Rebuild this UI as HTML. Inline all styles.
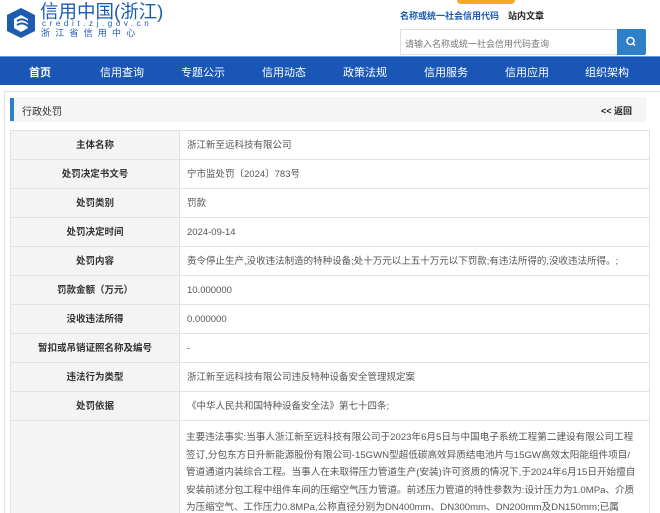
<!DOCTYPE html>
<html><head><meta charset="utf-8"><style>
*{margin:0;padding:0;box-sizing:border-box}
html,body{width:660px;height:513px;overflow:hidden}
body{background:#fff;font-family:"Liberation Sans","Noto Sans CJK SC",sans-serif}
#w{position:relative;width:660px;height:513px;overflow:hidden}
.abs{position:absolute}
.nav{left:0;top:56px;width:660px;height:29px;background:#1a56b6;border-top:1px solid #5aa0e0}
.nav span{position:absolute;top:7px;color:#fff;font-size:11px;transform:translateX(-50%)}
.frame{left:4px;top:91px;width:656px;height:422px;border:1px solid #dfe8d8;border-right:none;border-bottom:none}
.tbar{left:10px;top:97px;width:636px;height:25px;background:#f5f5f5}
.tw{position:absolute;left:10px;top:130px;width:641px;height:383px;overflow:hidden}
table{width:640px;border-collapse:collapse;table-layout:fixed;font-size:9.5px;color:#555}
td{border:1px solid #e2e2e2;height:29px;padding:1px 7px 0;white-space:nowrap;overflow:hidden;line-height:12px}
td.l{width:169px;background:#f4f4f4;text-align:center;color:#333;font-weight:bold}
</style></head><body><div id="w">
<svg class="abs" style="left:5px;top:7px" width="32" height="32" viewBox="0 0 32 32"><path d="M16 1 L30 8 L30 24 L16 31 L2 24 L2 8 Z" fill="#1c5bb0"/><path d="M9 12 L16 8 L23 12 L23 21 L16 25 L9 21 Z" fill="#fff"/><path d="M12 14 Q18 10 24 16 M12 18 Q18 14 24 20" stroke="#1c5bb0" stroke-width="2" fill="none"/></svg>
<div class="abs" style="left:40px;top:1px;font-size:18.5px;color:#1c5bb0;line-height:21px">信用中国(浙江)</div>
<div class="abs" style="left:42px;top:19px;font-size:8px;color:#1c5bb0;letter-spacing:3.6px;line-height:9px">credit.zj.gov.cn</div>
<div class="abs" style="left:41px;top:28px;font-size:9px;color:#1c5bb0;letter-spacing:5.2px;line-height:11px">浙江省信用中心</div>
<div class="abs" style="left:457px;top:0;width:58px;height:4px;background:#f5a623;border-radius:0 0 4px 4px"></div>
<div class="abs" style="left:400px;top:9px;font-size:9px;color:#1c5bb0;font-weight:bold">名称或统一社会信用代码</div>
<div class="abs" style="left:508px;top:9px;font-size:9px;color:#222;font-weight:bold">站内文章</div>
<div class="abs" style="left:400px;top:29px;width:218px;height:26px;border:1px solid #e0e0e0;font-size:9px;color:#777;padding:7px 4px">请输入名称或统一社会信用代码查询</div>
<div class="abs" style="left:617px;top:29px;width:29px;height:26px;background:#2f7fc8;border-radius:0 2px 2px 0"><svg width="29" height="26"><circle cx="13.5" cy="12" r="3.5" stroke="#fff" stroke-width="1.5" fill="none"/><path d="M16 14.5 L18 16.5" stroke="#fff" stroke-width="1.5"/></svg></div>
<div class="abs nav"><span style="left:40px;font-weight:bold">首页</span><span style="left:122px">信用查询</span><span style="left:203px">专题公示</span><span style="left:284px">信用动态</span><span style="left:365px">政策法规</span><span style="left:446px">信用服务</span><span style="left:527px">信用应用</span><span style="left:607px">组织架构</span></div>
<div class="abs frame"></div>
<div class="abs tbar"></div>
<div class="abs" style="left:10px;top:98px;width:4px;height:23px;background:#2f7fc8"></div>
<div class="abs" style="left:22px;top:103px;font-size:10px;color:#333">行政处罚</div>
<div class="abs" style="left:601px;top:104px;font-size:9px;color:#222;font-weight:bold">&lt;&lt; 返回</div>
<div class="tw"><table>
<tr><td class="l">主体名称</td><td>浙江新至远科技有限公司</td></tr>
<tr><td class="l">处罚决定书文号</td><td>宁市监处罚〔2024〕783号</td></tr>
<tr><td class="l">处罚类别</td><td>罚款</td></tr>
<tr><td class="l">处罚决定时间</td><td>2024-09-14</td></tr>
<tr><td class="l">处罚内容</td><td>责令停止生产,没收违法制造的特种设备;处十万元以上五十万元以下罚款;有违法所得的,没收违法所得。;</td></tr>
<tr><td class="l">罚款金额（万元）</td><td>10.000000</td></tr>
<tr><td class="l">没收违法所得</td><td>0.000000</td></tr>
<tr><td class="l">暂扣或吊销证照名称及编号</td><td>-</td></tr>
<tr><td class="l">违法行为类型</td><td>浙江新至远科技有限公司违反特种设备安全管理规定案</td></tr>
<tr><td class="l">处罚依据</td><td>《中华人民共和国特种设备安全法》第七十四条;</td></tr>
<tr><td class="l"></td><td style="padding:8px 4px 8px 6px;line-height:17.5px;vertical-align:top;font-size:9.6px;height:92px">主要违法事实:当事人浙江新至远科技有限公司于2023年6月5日与中国电子系统工程第二建设有限公司工程<br>签订,分包东方日升新能源股份有限公司-15GWN型超低碳高效异质结电池片与15GW高效太阳能组件项目/<br>管道通道内装综合工程。当事人在未取得压力管道生产(安装)许可资质的情况下,于2024年6月15日开始擅自<br>安装前述分包工程中组件车间的压缩空气压力管道。前述压力管道的特性参数为:设计压力为1.0MPa、介质<br>为压缩空气、工作压力0.8MPa,公称直径分别为DN400mm、DN300mm、DN200mm及DN150mm;已属<br>于(原质检总局2014年第114号文件)对压力管道的定义“最高工作压力大于或者等于0.1MPa(表压),介质为气</td></tr>
</table></div>
</div></body></html>
